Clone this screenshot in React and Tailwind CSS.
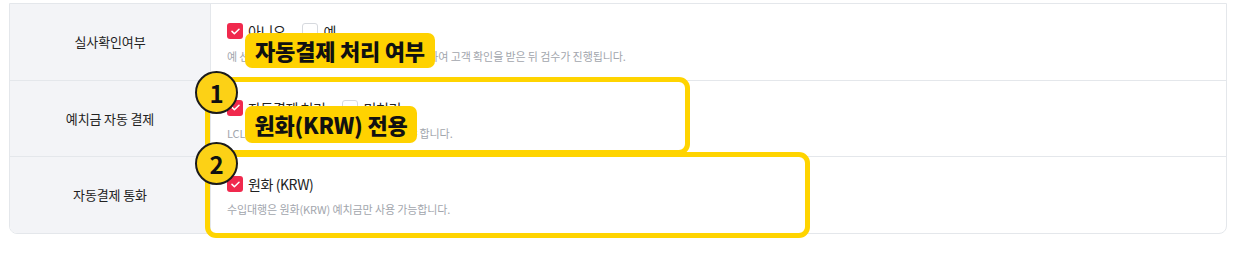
import React from 'react';

const rows = [
  {
    label: '실사확인여부',
    options: [
      { text: '아니오', checked: true },
      { text: '예', checked: false },
    ],
    desc: '예 선택 시 실사 진행 후 제품 현장 사진을 첨부하여 고객 확인을 받은 뒤 검수가 진행됩니다.',
    h: 'h-[77px]',
  },
  {
    label: '예치금 자동 결제',
    options: [
      { text: '자동결제 처리', checked: true },
      { text: '미처리', checked: false },
    ],
    desc: 'LCL 건은 예치금 자동결제로 결제 처리해야 합니다.',
    h: 'h-[76px]',
  },
  {
    label: '자동결제 통화',
    options: [{ text: '원화 (KRW)', checked: true }],
    desc: '수입대행은 원화(KRW) 예치금만 사용 가능합니다.',
    h: 'h-[76px]',
  },
];

function Checkbox({ checked }) {
  if (checked) {
    return (
      <span className="flex h-[16px] w-[16px] shrink-0 items-center justify-center rounded-[3px] bg-[#f0294d]">
        <svg width="9" height="7" viewBox="0 0 9 7" fill="none">
          <path d="M1 3.4 3.4 5.8 8 1.2" stroke="#fff" strokeWidth="1.5" strokeLinecap="round" strokeLinejoin="round" />
        </svg>
      </span>
    );
  }
  return <span className="h-[16px] w-[16px] shrink-0 rounded-[3px] border border-[#d6d9de] bg-white" />;
}

function Row({ row, last }) {
  return (
    <div className={`flex ${row.h} ${last ? '' : 'border-b border-[#e4e7eb]'}`}>
      <div className="flex w-[201px] shrink-0 items-center justify-center border-r border-[#e4e7eb] bg-[#f3f4f7] text-[13px] tracking-[-0.01em] text-[#222]">
        {row.label}
      </div>
      <div className="flex flex-col justify-center pl-[16px] pt-[1px]">
        <div className="flex items-center gap-[17px]">
          {row.options.map(o => (
            <label key={o.text} className="flex items-center gap-[5px] text-[14px] leading-[20px] tracking-[-0.03em] text-[#222]">
              <Checkbox checked={o.checked} />
              {o.text}
            </label>
          ))}
        </div>
        <p className="mt-[7px] text-[11px] leading-[16px] tracking-[-0.01em] text-[#a2a6ad]">{row.desc}</p>
      </div>
    </div>
  );
}

function Tag({ className, children }) {
  return (
    <div className={`absolute flex items-center justify-center rounded-[7px] bg-[#ffd200] text-[22px] font-extrabold tracking-[-0.01em] text-[#111] ${className}`}>
      {children}
    </div>
  );
}

function Badge({ className, n }) {
  return (
    <div className={`absolute flex h-[43px] w-[43px] items-center justify-center rounded-full border-2 border-[#1b1b1b] bg-[#fcd116] text-[24px] font-bold text-[#111] ${className}`}>
      {n}
    </div>
  );
}

export default function App() {
  return (
    <div className="relative h-[256px] w-[1236px] overflow-hidden bg-white font-['Noto_Sans_CJK_KR','Noto_Sans',sans-serif]">
      <div className="ml-[9px] mt-[3px] w-[1218px] overflow-hidden rounded-b-[8px] border border-[#e4e7eb]">
        {rows.map((row, i) => (
          <Row key={row.label} row={row} last={i === rows.length - 1} />
        ))}
      </div>

      {/* annotation overlay */}
      <div className="absolute left-[205px] top-[77px] h-[78px] w-[485px] rounded-[11px] border-[5px] border-[#ffd400]" />
      <div className="absolute left-[205px] top-[152px] h-[86px] w-[605px] rounded-[11px] border-[5px] border-[#ffd400]" />
      <Tag className="left-[245px] top-[33px] h-[35px] w-[190px]">자동결제 처리 여부</Tag>
      <Tag className="left-[245px] top-[106px] h-[37px] w-[172px]">원화(KRW) 전용</Tag>
      <Badge className="left-[195px] top-[71px]" n="1" />
      <Badge className="left-[195px] top-[142px]" n="2" />
    </div>
  );
}
